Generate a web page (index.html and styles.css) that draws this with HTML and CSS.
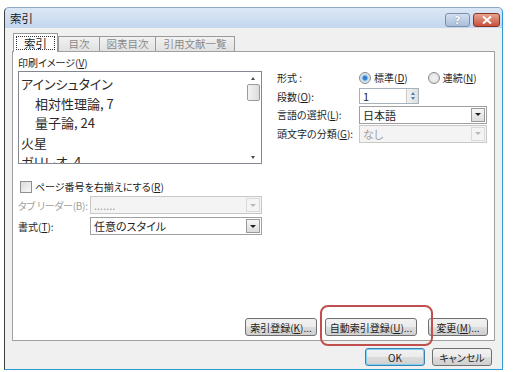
FILE: index.html
```html
<!DOCTYPE html>
<html lang="ja">
<head>
    <meta charset="UTF-8">
    <meta name="viewport" content="width=device-width, initial-scale=1.0">
    <title>索引</title>
    <link rel="stylesheet" href="styles.css">
</head>
<body>

    <div class="window">
        <div class="titlebar">
            <span class="title">索引</span>
            <div class="caption-buttons">
                <span class="caption-btn help">?</span>
                <span class="caption-btn close">
                    <svg width="10" height="8" viewBox="0 0 10 8"><path d="M1 0.5 L9 7.5 M9 0.5 L1 7.5" stroke="#fff" stroke-width="2"/></svg>
                </span>
            </div>
        </div>

        <div class="client">
            <div class="tabs">
                <div class="tab active"><span class="focus">索引</span></div>
                <div class="tab t2">目次</div>
                <div class="tab t3">図表目次</div>
                <div class="tab t4">引用文献一覧</div>
            </div>

            <div class="panel">
                <div class="top-section">
                    <div class="preview-col">
                        <div class="label">印刷イメージ(<u>V</u>)</div>
                        <div class="preview">
                            <div class="preview-text">
                                <div>アインシュタイン</div>
                                <div class="indent">相対性理論, 7</div>
                                <div class="indent">量子論, 24</div>
                                <div>火星</div>
                                <div>ガリレオ, 4</div>
                            </div>
                            <div class="vscroll">
                                <span class="arrow-up"></span>
                                <span class="thumb"></span>
                                <span class="arrow-down"></span>
                            </div>
                        </div>
                    </div>

                    <div class="settings">
                        <div class="setting-row">
                            <span class="setting-label">形式 :</span>
                            <div class="radios">
                                <span class="radio checked"></span><span class="radio-text">標準(<u>D</u>)</span>
                                <span class="radio second"></span><span class="radio-text">連続(<u>N</u>)</span>
                            </div>
                        </div>
                        <div class="setting-row">
                            <span class="setting-label">段数(<u>O</u>):</span>
                            <div class="spin">
                                <span class="spin-value">1</span>
                                <span class="spin-buttons">
                                    <span class="spin-up"></span>
                                    <span class="spin-down"></span>
                                </span>
                            </div>
                        </div>
                        <div class="setting-row">
                            <span class="setting-label">言語の選択(<u>L</u>):</span>
                            <div class="select wide">
                                <span class="select-value">日本語</span>
                                <span class="drop"><span class="tri"></span></span>
                            </div>
                        </div>
                        <div class="setting-row">
                            <span class="setting-label">頭文字の分類(<u>G</u>):</span>
                            <div class="select wide disabled">
                                <span class="select-value">なし</span>
                                <span class="drop"><span class="tri"></span></span>
                            </div>
                        </div>
                    </div>
                </div>

                <div class="check-row">
                    <span class="checkbox"></span>
                    <span>ページ番号を右揃えにする(<u>R</u>)</span>
                </div>
                <div class="form-row">
                    <span class="form-label disabled-text tight">タブ<span class="gap"></span>リーダー(B):</span>
                    <div class="select narrow disabled">
                        <span class="select-value">.......</span>
                        <span class="drop"><span class="tri"></span></span>
                    </div>
                </div>
                <div class="form-row">
                    <span class="form-label">書式(<u>T</u>):</span>
                    <div class="select narrow">
                        <span class="select-value">任意のスタイル</span>
                        <span class="drop"><span class="tri"></span></span>
                    </div>
                </div>

                <div class="panel-buttons">
                    <button class="btn w72">索引登録(<u>K</u>)...</button>
                    <button class="btn w92 marked">自動索引登録(<u>U</u>)...<span class="highlight"></span></button>
                    <button class="btn w60">変更(<u>M</u>)...</button>
                </div>
            </div>

            <div class="footer">
                <button class="btn w60 default">OK</button>
                <button class="btn w60">キャンセル</button>
            </div>
        </div>
    </div>

</body>
</html>
```

FILE: styles.css
```css
/* Base */
body {
    margin: 0;
    background-color: #ffffff;
    font-family: "Noto Sans CJK JP", "Noto Sans", sans-serif;
    font-size: 10px;
    font-feature-settings: "palt";
    color: #1e1e1e;
}
u {
    text-decoration: underline;
    text-underline-offset: 1px;
}

/* Window frame */
.window {
    margin: 7px 0 0 4px;
    width: 497px;
    height: 361px;
    border-left: 1px solid #3c3c3c;
    border-right: 1px solid #2f9bd6;
    border-bottom: 1px solid #2f9bd6;
    border-top: 1px solid #8fa9c8;
    border-radius: 5px 5px 0 0;
    background-color: #cfdff1;
    display: flex;
    flex-direction: column;
}
.titlebar {
    height: 20px;
    display: flex;
    align-items: center;
    justify-content: space-between;
    padding: 0 2px 0 5px;
    background: linear-gradient(#dbe7f5, #c4d7ee);
    border-radius: 5px 5px 0 0;
}
.title {
    font-size: 11.5px;
    color: #1a1a1a;
}
.caption-buttons {
    display: flex;
    gap: 3px;
    margin-top: 4px;
}
.caption-btn {
    height: 12px;
    border: 1px solid #7b8fab;
    border-radius: 3px;
    display: flex;
    align-items: center;
    justify-content: center;
}
.help {
    width: 23px;
    background: linear-gradient(#d3dff0, #aabdd8);
    color: #ffffff;
    font-weight: bold;
    font-size: 11px;
    font-family: "DejaVu Sans", sans-serif;
    text-shadow: 0 0 1px #4b5f7c;
}
.close {
    width: 25px;
    background: linear-gradient(#e6a48f, #c9503c);
    border-color: #8b3326;
}

/* Client area */
.client {
    flex: 1;
    background-color: #f0f0f0;
    padding: 5px 7px 0 7px;
    display: flex;
    flex-direction: column;
}

/* Tabs */
.tabs {
    display: flex;
    align-items: flex-end;
    height: 18px;
    padding-left: 1px;
    position: relative;
    z-index: 1;
}
.tab {
    height: 14px;
    line-height: 14px;
    border: 1px solid #9a9a9a;
    border-bottom: none;
    background: linear-gradient(#f2f2f2, #e1e1e1);
    color: #8a8a8a;
    margin-left: -1px;
    text-align: center;
    font-size: 10.5px;
    white-space: nowrap;
}
.t2 { width: 40px; }
.t3 { width: 55px; }
.t4 { width: 78px; }
.tab.active {
    width: 43px;
    height: 18px;
    line-height: 18px;
    background: #ffffff;
    color: #1e1e1e;
    margin-bottom: -1px;
    margin-left: 0;
    margin-right: 1px;
    font-size: 11.5px;
    display: flex;
    align-items: center;
    justify-content: center;
}
.focus {
    border: 1px dotted #333;
    line-height: 12px;
    padding: 0 7px;
}

/* Tab panel */
.panel {
    height: 284px;
    border: 1px solid #a0a0a0;
    background-color: #ffffff;
    padding: 0 6px 4px 5px;
    display: flex;
    flex-direction: column;
    white-space: nowrap;
}
.top-section {
    display: flex;
    gap: 15px;
}
.label {
    padding-top: 4px;
    height: 15px;
    line-height: 14px;
}

/* Print preview */
.preview {
    width: 242px;
    height: 91px;
    border: 1px solid #828790;
    display: flex;
    overflow: hidden;
}
.preview-text {
    flex: 1;
    padding: 2px 0 0 2px;
    font-size: 13px;
    line-height: 19.5px;
    color: #2a2a2a;
}
.indent {
    padding-left: 14px;
}
.vscroll {
    width: 16px;
    display: flex;
    flex-direction: column;
    align-items: center;
    padding: 5px 0 4px 0;
}
.arrow-up {
    width: 0;
    height: 0;
    border: 2px solid transparent;
    border-bottom: 3px solid #4a4a4a;
    border-top: none;
}
.thumb {
    width: 11px;
    height: 15px;
    margin-top: 4px;
    border: 1px solid #9a9a9a;
    border-radius: 2px;
    background: linear-gradient(90deg, #f3f3f3, #dcdcdc);
}
.arrow-down {
    margin-top: auto;
    width: 0;
    height: 0;
    border: 2px solid transparent;
    border-top: 3px solid #4a4a4a;
    border-bottom: none;
}

/* Settings on the right */
.settings {
    padding-top: 17px;
    display: flex;
    flex-direction: column;
}
.setting-row {
    display: flex;
    align-items: center;
    height: 17px;
    margin-bottom: 2px;
}
.setting-row:nth-child(2) { height: 16px; }
.setting-label {
    width: 82px;
}
.radios {
    display: flex;
    align-items: center;
}
.radio {
    width: 10px;
    height: 10px;
    border: 1px solid #8a8a8a;
    border-radius: 50%;
    background: radial-gradient(circle, #f4f4f4, #d8d8d8);
    margin-right: 3px;
}
.radio.checked {
    background: radial-gradient(circle, #2a6fc9 0, #3b88d8 2px, #b8d4ef 3px, #eaeaea 5px);
}
.radio.second {
    margin-left: 20px;
}

/* Spin box */
.spin {
    width: 58px;
    height: 14px;
    border: 1px solid #a8b1bd;
    display: flex;
    justify-content: space-between;
}
.spin-value {
    padding-left: 3px;
    line-height: 14px;
    font-size: 11px;
}
.spin-buttons {
    width: 11px;
    display: flex;
    flex-direction: column;
    border-left: 1px solid #c8c8c8;
    background: linear-gradient(90deg, #f2f2f2, #dedede);
    align-items: center;
    justify-content: center;
    gap: 2px;
}
.spin-up {
    width: 0; height: 0;
    border: 2px solid transparent;
    border-bottom: 3px solid #4c7fb8;
    border-top: none;
}
.spin-down {
    width: 0; height: 0;
    border: 2px solid transparent;
    border-top: 3px solid #4c7fb8;
    border-bottom: none;
}

/* Combo boxes */
.select {
    height: 16px;
    border: 1px solid #a0a0a0;
    display: flex;
    justify-content: space-between;
    align-items: stretch;
    background-color: #ffffff;
}
.select.wide { width: 126px; }
.select.narrow { width: 170px; }
.select-value {
    padding-left: 3px;
    line-height: 16px;
    font-size: 11px;
}
.drop {
    width: 12px;
    margin: 1px;
    border: 1px solid #9a9a9a;
    background: linear-gradient(#f6f6f6, #dcdcdc);
    display: flex;
    align-items: center;
    justify-content: center;
}
.tri {
    width: 0; height: 0;
    border: 3px solid transparent;
    border-top: 3px solid #1e1e1e;
    border-bottom: none;
}
.select.disabled {
    background-color: #f4f4f4;
    border-color: #c8c8c8;
}
.select.disabled .select-value {
    color: #a0a0a0;
}
.select.disabled .drop {
    border-color: #dadada;
    background: #f4f4f4;
}
.select.disabled .tri {
    border-top-color: #b8b8b8;
}

/* Lower left options */
.check-row {
    display: flex;
    align-items: center;
    gap: 3px;
    margin-top: 15px;
    padding-left: 2px;
    height: 15px;
}
.checkbox {
    width: 10px;
    height: 10px;
    border: 1px solid #8f8f8f;
    background: linear-gradient(135deg, #dcdcdc, #f8f8f8);
}
.form-row {
    display: flex;
    align-items: center;
    margin-top: 3px;
}
.check-row + .form-row {
    margin-top: 2px;
}
.form-label {
    width: 72px;
    flex-shrink: 0;
}
.form-label.tight {
    letter-spacing: -0.3px;
}
.gap {
    display: inline-block;
    width: 2px;
}
.disabled-text {
    color: #a0a0a0;
}

/* Buttons */
.btn {
    font-family: inherit;
    font-size: 10px;
    font-feature-settings: "palt";
    white-space: nowrap;
    height: 18px;
    padding: 0;
    border: 1px solid #707070;
    border-radius: 3px;
    background: linear-gradient(#f2f2f2 0, #ebebeb 50%, #dddddd 51%, #cfcfcf 100%);
    color: #1e1e1e;
    line-height: 15px;
}
.w60 { width: 60px; }
.w72 { width: 72px; }
.w92 { width: 92px; }
.btn.default {
    border-color: #3c7fb1;
    box-shadow: inset 0 0 0 1px #7fd0f5;
}
.panel-buttons {
    margin-top: auto;
    display: flex;
    justify-content: flex-end;
    gap: 8px;
}
.panel-buttons .btn:last-child {
    margin-left: 3px;
}
.marked {
    position: relative;
}
.highlight {
    position: absolute;
    left: -6px;
    top: -14px;
    width: 109px;
    height: 37px;
    border: 2px solid #c0504d;
    border-radius: 8px;
}

/* Footer */
.footer {
    display: flex;
    justify-content: flex-end;
    gap: 7px;
    padding: 7px 3px 0 0;
}
```
